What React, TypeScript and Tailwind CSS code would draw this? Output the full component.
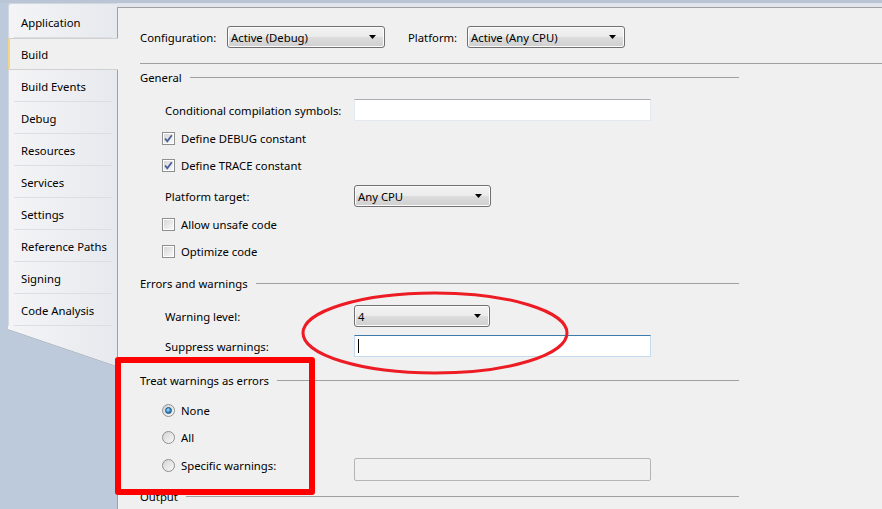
import React from 'react';

const TABS = [
  'Application',
  'Build',
  'Build Events',
  'Debug',
  'Resources',
  'Services',
  'Settings',
  'Reference Paths',
  'Signing',
  'Code Analysis',
];

const Arrow = () => (
  <svg width="7" height="4" viewBox="0 0 7 4">
    <polygon points="0,0 7,0 3.5,4" fill="#000" />
  </svg>
);

const Dropdown = ({value, className}: {value: string; className: string}) => (
  <div
    className={`flex h-[22px] items-center justify-between rounded-[3px] border border-[#707070] bg-[linear-gradient(#f2f2f2_0%,#ebebeb_50%,#dddddd_50%,#cfcfcf_100%)] pl-[3px] pr-[8px] shadow-[inset_0_0_0_1px_#fcfcfc] ${className}`}
  >
    <span>{value}</span>
    <Arrow />
  </div>
);

const TextBox = ({focused, disabled}: {focused?: boolean; disabled?: boolean}) => {
  if (focused) {
    return (
      <div className="flex h-[22px] w-[297px] items-center border border-[#c5daed] border-t-[#3d7bad] bg-white pl-[3px]">
        <div className="h-[14px] w-px bg-black" />
      </div>
    );
  }
  if (disabled) {
    return <div className="h-[23px] w-[297px] rounded-[2px] border border-[#b5b5b5] bg-[#f0f0f0]" />;
  }
  return <div className="h-[22px] w-[297px] border border-[#e3e9ef] border-t-[#abadb3] bg-white" />;
};

const CheckBox = ({checked, label}: {checked?: boolean; label: string}) => (
  <div className="flex h-[22px] items-center gap-[6px] pl-[22px]">
    <div className="flex h-[13px] w-[13px] items-center justify-center border border-[#8e8f8f] bg-white">
      <div className="relative h-[9px] w-[9px] bg-[linear-gradient(135deg,#d7d7d7,#f8f8f8)]">
        {checked && (
          <svg className="absolute -left-px -top-px" width="11" height="11" viewBox="0 0 11 11">
            <path d="M2 5.5 L4.3 8.2 L8.8 2.2" fill="none" stroke="#4a5f97" strokeWidth="1.8" />
          </svg>
        )}
      </div>
    </div>
    <span>{label}</span>
  </div>
);

const Radio = ({checked, label}: {checked?: boolean; label: string}) => (
  <div className="flex h-[22px] items-center gap-[6px] pl-[22px]">
    <div className="flex h-[13px] w-[13px] items-center justify-center rounded-full border border-[#8e8f8f] bg-[linear-gradient(135deg,#d4d4d4,#f9f9f9)]">
      {checked && (
        <div className="h-[7px] w-[7px] rounded-full border border-[#1b4f7e] bg-[radial-gradient(circle_at_40%_35%,#a6e0fb,#2b86c4_60%,#17528a)]" />
      )}
    </div>
    <span>{label}</span>
  </div>
);

const Header = ({title, className}: {title: string; className: string}) => (
  <div className={`flex h-[22px] w-[599px] items-center gap-[8px] ${className}`}>
    <span>{title}</span>
    <div className="h-px flex-1 bg-[#a0a0a0]" />
  </div>
);

const Field = ({label, className, children}: {label: string; className: string; children: React.ReactNode}) => (
  <div className={`flex h-[22px] items-center pl-[25px] ${className}`}>
    <span className="w-[189px]">{label}</span>
    {children}
  </div>
);

const TabList = () => (
  <div className="relative ml-[8px] flex w-[109px] flex-col">
    <div className="h-[3px] rounded-tl-[4px] border-l border-t border-[#d2d8e0] bg-[linear-gradient(90deg,#f4f4f6,#e6e9ee)]" />
    {TABS.map(tab =>
      tab === 'Build' ? (
        <div
          key={tab}
          className="z-10 flex h-[32px] w-[110px] items-center border-y border-[#d0d0d0] border-l-2 border-l-[#f2d78a] bg-[#f0f0f0] pl-[11px]"
        >
          <span>{tab}</span>
        </div>
      ) : (
        <div key={tab} className="flex h-[32px] flex-col border-l border-[#d2d8e0] bg-[linear-gradient(90deg,#f4f4f6,#e6e9ee)] pl-[5px]">
          <div className="flex flex-1 items-center pl-[7px]">
            <span>{tab}</span>
          </div>
          <div className="mr-[5px] h-px bg-[#dcdee2]" />
        </div>
      ),
    )}
    <div className="relative h-[41px] bg-[linear-gradient(90deg,#f4f4f6,#e6e9ee)] [clip-path:polygon(0_0,100%_0,100%_100%,0_4px)]">
      <svg className="absolute inset-0 h-full w-full" viewBox="0 0 109 41" preserveAspectRatio="none">
        <line x1="0" y1="4" x2="109" y2="41" stroke="#a3acb8" strokeWidth="1.5" />
      </svg>
    </div>
  </div>
);

export default function App() {
  return (
    <div className="relative flex h-[509px] w-[882px] flex-col overflow-hidden bg-[#bccadb] font-['Noto_Sans',sans-serif] text-[11.3px] leading-none text-black [&_span]:translate-y-px">
      <div className="h-[3px] bg-[#b9c5d5]" />
      <div className="flex flex-1">
        <div className="w-[117px]">
          <TabList />
        </div>
        <div className="flex flex-1 flex-col">
          <div className="h-[4px] bg-[#e2e6ec]" />
          <div className="flex flex-1 flex-col border-l border-t border-[#a0a0a0] bg-[#f0f0f0] pl-[22px]">
            <div className="mt-[18px] flex h-[22px] items-center">
              <span className="w-[87px]">Configuration:</span>
              <Dropdown value="Active (Debug)" className="w-[158px]" />
              <span className="ml-[23px] w-[59px]">Platform:</span>
              <Dropdown value="Active (Any CPU)" className="w-[158px]" />
            </div>
            <div className="mt-[15px] h-px bg-[#a0a0a0]" />

            <Header title="General" className="mt-[2px]" />
            <Field label="Conditional compilation symbols:" className="mt-[11px]">
              <TextBox />
            </Field>
            <div className="mt-[6px]">
              <CheckBox checked label="Define DEBUG constant" />
            </div>
            <div className="mt-[5px]">
              <CheckBox checked label="Define TRACE constant" />
            </div>
            <Field label="Platform target:" className="mt-[9px]">
              <Dropdown value="Any CPU" className="w-[137px]" />
            </Field>
            <div className="mt-[6px]">
              <CheckBox label="Allow unsafe code" />
            </div>
            <div className="mt-[5px]">
              <CheckBox label="Optimize code" />
            </div>

            <Header title="Errors and warnings" className="mt-[10px]" />
            <Field label="Warning level:" className="mt-[11px]">
              <Dropdown value="4" className="w-[136px]" />
            </Field>
            <Field label="Suppress warnings:" className="mt-[8px]">
              <TextBox focused />
            </Field>

            <Header title="Treat warnings as errors" className="mt-[12px]" />
            <div className="mt-[8px]">
              <Radio checked label="None" />
            </div>
            <div className="mt-[5px]">
              <Radio label="All" />
            </div>
            <div className="mt-[6px] flex h-[27px] items-start">
              <div className="w-[214px]">
                <Radio label="Specific warnings:" />
              </div>
              <div className="mt-[4px]">
                <TextBox disabled />
              </div>
            </div>

            <Header title="Output" className="mt-[4px]" />
          </div>
        </div>
      </div>

      <svg className="pointer-events-none absolute left-[300px] top-[291px]" width="272" height="86" viewBox="0 0 272 86">
        <ellipse cx="135" cy="42" rx="132" ry="40" fill="none" stroke="#ed1c24" strokeWidth="3" />
      </svg>
      <div className="pointer-events-none absolute left-[115px] top-[357px] h-[138px] w-[200px] rounded-[3px] border-[6px] border-[#ff0000]" />
    </div>
  );
}
